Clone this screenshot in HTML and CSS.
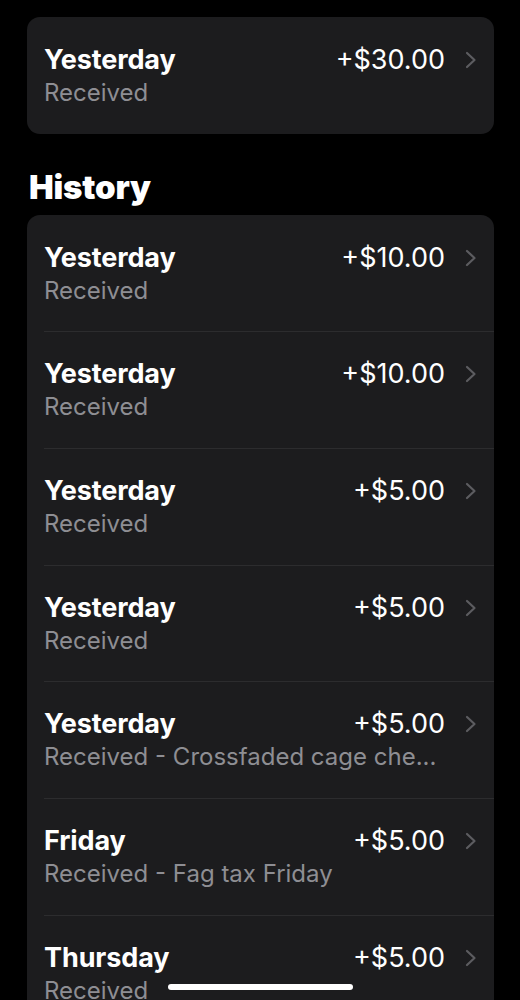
FILE: index.html
```html
<!DOCTYPE html>
<html lang="en">
<head>
<meta charset="utf-8">
<title>History</title>
<link rel="stylesheet" href="styles.css">
</head>
<body>
<main class="screen">
  <section class="card">
    <div class="row">
      <div class="title">Yesterday</div>
      <div class="amount">+$30.00</div>
      <svg class="chev" viewBox="0 0 12 18" width="12" height="18"><path d="M2 2 L9.5 9 L2 16" fill="none" stroke="currentColor" stroke-width="2.2" stroke-linecap="round" stroke-linejoin="round"/></svg>
      <div class="sub">Received</div>
    </div>
  </section>

  <h2 class="heading">History</h2>

  <section class="card">
    <div class="row">
      <div class="title">Yesterday</div>
      <div class="amount">+$10.00</div>
      <svg class="chev" viewBox="0 0 12 18" width="12" height="18"><path d="M2 2 L9.5 9 L2 16" fill="none" stroke="currentColor" stroke-width="2.2" stroke-linecap="round" stroke-linejoin="round"/></svg>
      <div class="sub">Received</div>
    </div>
    <div class="row">
      <div class="title">Yesterday</div>
      <div class="amount">+$10.00</div>
      <svg class="chev" viewBox="0 0 12 18" width="12" height="18"><path d="M2 2 L9.5 9 L2 16" fill="none" stroke="currentColor" stroke-width="2.2" stroke-linecap="round" stroke-linejoin="round"/></svg>
      <div class="sub">Received</div>
    </div>
    <div class="row">
      <div class="title">Yesterday</div>
      <div class="amount">+$5.00</div>
      <svg class="chev" viewBox="0 0 12 18" width="12" height="18"><path d="M2 2 L9.5 9 L2 16" fill="none" stroke="currentColor" stroke-width="2.2" stroke-linecap="round" stroke-linejoin="round"/></svg>
      <div class="sub">Received</div>
    </div>
    <div class="row">
      <div class="title">Yesterday</div>
      <div class="amount">+$5.00</div>
      <svg class="chev" viewBox="0 0 12 18" width="12" height="18"><path d="M2 2 L9.5 9 L2 16" fill="none" stroke="currentColor" stroke-width="2.2" stroke-linecap="round" stroke-linejoin="round"/></svg>
      <div class="sub">Received</div>
    </div>
    <div class="row">
      <div class="title">Yesterday</div>
      <div class="amount">+$5.00</div>
      <svg class="chev" viewBox="0 0 12 18" width="12" height="18"><path d="M2 2 L9.5 9 L2 16" fill="none" stroke="currentColor" stroke-width="2.2" stroke-linecap="round" stroke-linejoin="round"/></svg>
      <div class="sub">Received - Crossfaded cage che...</div>
    </div>
    <div class="row">
      <div class="title">Friday</div>
      <div class="amount">+$5.00</div>
      <svg class="chev" viewBox="0 0 12 18" width="12" height="18"><path d="M2 2 L9.5 9 L2 16" fill="none" stroke="currentColor" stroke-width="2.2" stroke-linecap="round" stroke-linejoin="round"/></svg>
      <div class="sub">Received - Fag tax Friday</div>
    </div>
    <div class="row">
      <div class="title">Thursday</div>
      <div class="amount">+$5.00</div>
      <svg class="chev" viewBox="0 0 12 18" width="12" height="18"><path d="M2 2 L9.5 9 L2 16" fill="none" stroke="currentColor" stroke-width="2.2" stroke-linecap="round" stroke-linejoin="round"/></svg>
      <div class="sub">Received</div>
    </div>
  </section>
  <div class="home-indicator"></div>
</main>
</body>
</html>
```
FILE: styles.css
```css
html, body {
  margin: 0;
  padding: 0;
  background: #000;
}
body {
  width: 520px;
  height: 1000px;
  overflow: hidden;
  font-family: Inter, "Liberation Sans", sans-serif;
  color: #fff;
}
.screen {
  position: relative;
  height: 1000px;
  overflow: hidden;
  padding: 17px 26px 0 27px;
  box-sizing: border-box;
}
.card {
  background: #1c1c1e;
  border-radius: 13px;
  overflow: hidden;
}
.heading {
  margin: 0;
  padding: 33px 0 8px 2px;
  font-size: 33px;
  line-height: 40px;
  font-weight: 900;
  letter-spacing: -0.2px;
}
.row {
  display: grid;
  grid-template-columns: 1fr auto 12px;
  column-gap: 20px;
  align-items: center;
  margin-left: 17px;
  padding: 26px 17px 23.7px 0;
  border-top: 1px solid #2c2c2e;
}
.row:first-child {
  border-top: none;
  padding-top: 27px;
}
.title {
  font-size: 27px;
  line-height: 32px;
  font-weight: 700;
  letter-spacing: -0.1px;
}
.amount {
  font-size: 27px;
  line-height: 32px;
  font-weight: 400;
}
.chev {
  color: #5c5c60;
  display: block;
}
.sub {
  grid-column: 1 / -1;
  font-size: 24px;
  line-height: 34px;
  color: #8e8e93;
  white-space: nowrap;
}
.home-indicator {
  position: absolute;
  left: 168px;
  bottom: 10px;
  width: 185px;
  height: 6px;
  border-radius: 3px;
  background: #fff;
}
```
